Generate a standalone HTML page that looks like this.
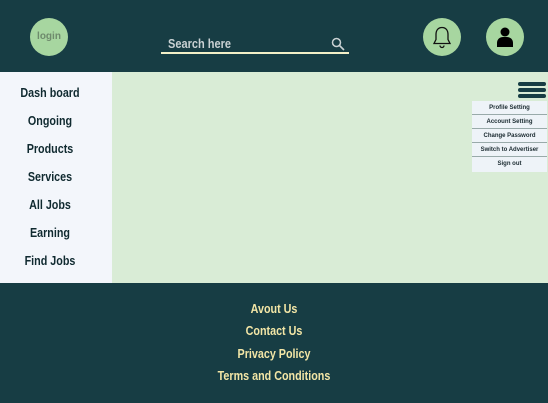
<!DOCTYPE html>
<html><head><style>
body{margin:0;width:548px;height:403px;overflow:hidden;font-family:"Liberation Sans",sans-serif;background:#173d44;position:relative}
.c{position:absolute;width:38px;height:38px;border-radius:50%;background:#a7d6a0;top:18px}
.hd{position:absolute;left:0;top:0;width:548px;height:72px;background:#173d44}
.main{position:absolute;left:0;top:72px;width:548px;height:211px;background:#d9ecd6}
.side{position:absolute;left:0;top:72px;width:112px;height:211px;background:#f3f6fb}
.side div{position:absolute;left:0;width:100px;text-align:center;font-weight:bold;font-size:12.5px;color:#102a30;transform:scaleX(0.86)}
.ft div{position:absolute;left:0;width:548px;text-align:center;font-weight:bold;font-size:12.5px;color:#f3e6a6;transform:scaleX(0.86)}
.m{position:absolute;left:472px;width:75px;height:13px;background:#eef3f8;border-bottom:1px solid #9aa;font-size:6px;font-weight:bold;text-align:center;line-height:14px;color:#1a2a30}
.hb{position:absolute;left:518px;width:28px;height:4px;border-radius:2px;background:#173d44}
</style></head><body>
<div class="hd"></div>
<div class="c" style="left:30px"><div style="text-align:center;line-height:38px;font-size:10px;font-weight:bold;color:#6e8a6c">login</div></div>
<div style="position:absolute;left:168px;top:37px;font-size:12.5px;font-weight:bold;color:#c9d1d3;transform:scaleX(0.88);transform-origin:left">Search here</div>
<svg style="position:absolute;left:331px;top:37px" width="14" height="14" viewBox="0 0 14 14"><circle cx="5.5" cy="5.5" r="4" fill="none" stroke="#c9d1d3" stroke-width="1.5"/><path d="M8.5 8.5L13 13" stroke="#c9d1d3" stroke-width="1.6"/></svg>
<div style="position:absolute;left:161px;top:52px;width:188px;height:2px;background:#f3f0c8"></div>
<div class="c" style="left:423px"><svg width="38" height="38" viewBox="0 0 38 38"><path d="M19 9.5c-4 0-6 3-6 7v5l-2 4h16l-2-4v-5c0-4-2-7-6-7z M17 27.5a2 2 0 0 0 4 0" fill="none" stroke="#111" stroke-width="1.3"/></svg></div>
<div class="c" style="left:486px"><svg width="38" height="38" viewBox="0 0 38 38"><circle cx="19" cy="14" r="4.5" fill="#000"/><path d="M11 29v-4c0-4 3-6 6-6h4c3 0 6 2 6 6v4z" fill="#000"/></svg></div>
<div class="main"></div>
<div class="side">
<div style="top:14px">Dash board</div><div style="top:42px">Ongoing</div><div style="top:70px">Products</div><div style="top:98px">Services</div><div style="top:126px">All Jobs</div><div style="top:154px">Earning</div><div style="top:182px">Find Jobs</div>
</div>
<div class="hb" style="top:82px"></div><div class="hb" style="top:88px"></div><div class="hb" style="top:94px"></div>
<div class="m" style="top:101px">Profile Setting</div>
<div class="m" style="top:115px">Account Setting</div>
<div class="m" style="top:129px">Change Password</div>
<div class="m" style="top:143px">Switch to Advertiser</div>
<div class="m" style="top:157px;border:none;height:15px">Sign out</div>
<div class="ft"><div style="top:302px">Avout Us</div><div style="top:324px">Contact Us</div><div style="top:347px">Privacy Policy</div><div style="top:369px">Terms and Conditions</div></div>
</body></html>
